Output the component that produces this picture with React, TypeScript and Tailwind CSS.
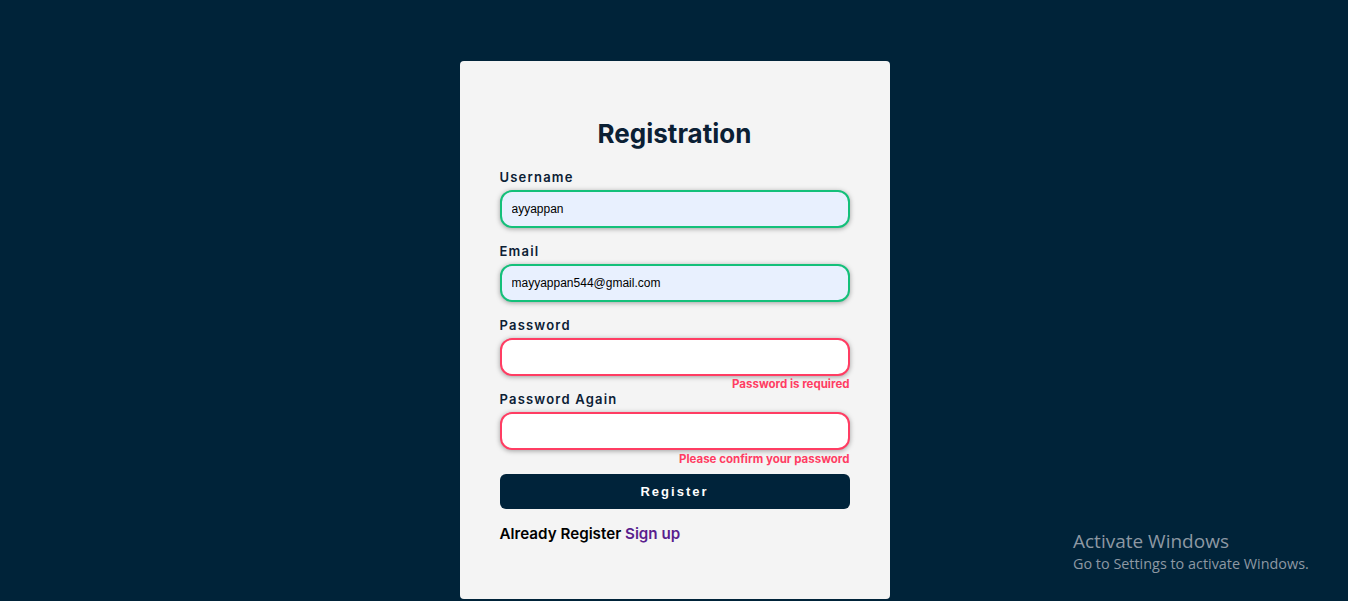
import React from 'react'

const labelCls =
  "block text-[13px] leading-[18px] font-semibold tracking-[1.2px] text-[#0b2034]"
const inputBase =
  "block w-full h-[38px] rounded-[12px] border-2 px-[10px] text-[12px] text-black outline-none shadow-[0_1px_5px_rgba(0,0,0,0.35)] [font-family:'Liberation_Sans',Arial,sans-serif]"
const errorCls = "text-right text-[11.5px] font-bold text-[#ff3d63]"

const App = () => {
  return (
    <div className="relative min-h-[601px] bg-[#002339] pt-[61px] pl-px [font-family:Inter,'Noto_Sans',sans-serif]">
      {/* Card */}
      <div className="mx-auto w-[430px] h-[538px] bg-[#f4f4f4] rounded-[4px] px-10 pt-[56px]">
        <h2 className="text-center text-[26px] leading-[34px] font-bold text-[#0b2034] mb-[17px]">
          Registration
        </h2>

        <label className={labelCls}>Username</label>
        <input
          className={`${inputBase} mt-1 border-[#14c07a] bg-[#e8f0fe]`}
          defaultValue="ayyappan"
        />

        <label className={`${labelCls} mt-[14px]`}>Email</label>
        <input
          className={`${inputBase} mt-1 border-[#14c07a] bg-[#e8f0fe]`}
          defaultValue="mayyappan544@gmail.com"
        />

        <label className={`${labelCls} mt-[14px]`}>Password</label>
        <input type="password" className={`${inputBase} mt-1 border-[#ff3d63] bg-white`} />
        <p className={`${errorCls} mt-[3px] leading-[11px]`}>Password is required</p>

        <label className={labelCls}>Password Again</label>
        <input type="password" className={`${inputBase} mt-1 border-[#ff3d63] bg-white`} />
        <p className={`${errorCls} mt-[3px] leading-[13px]`}>Please confirm your password</p>

        <button className="mt-[8px] w-full h-[35px] rounded-[6px] bg-[#00233a] text-white text-[13px] font-bold tracking-[2px] [font-family:'Liberation_Sans',Arial,sans-serif]">
          Register
        </button>

        <p className="mt-[14px] text-[15.2px] leading-[22px] font-semibold text-black">
          Already Register <a className="text-[#5a1e8e]">Sign up</a>
        </p>
      </div>

      {/* Windows watermark */}
      <div className="absolute left-[1073px] top-[528px] text-[#8d98a3] [font-family:'Open_Sans','Noto_Sans',sans-serif]">
        <p className="text-[19px] leading-[26px]">Activate Windows</p>
        <p className="text-[14.4px] leading-[20px]">Go to Settings to activate Windows.</p>
      </div>
    </div>
  )
}

export default App
